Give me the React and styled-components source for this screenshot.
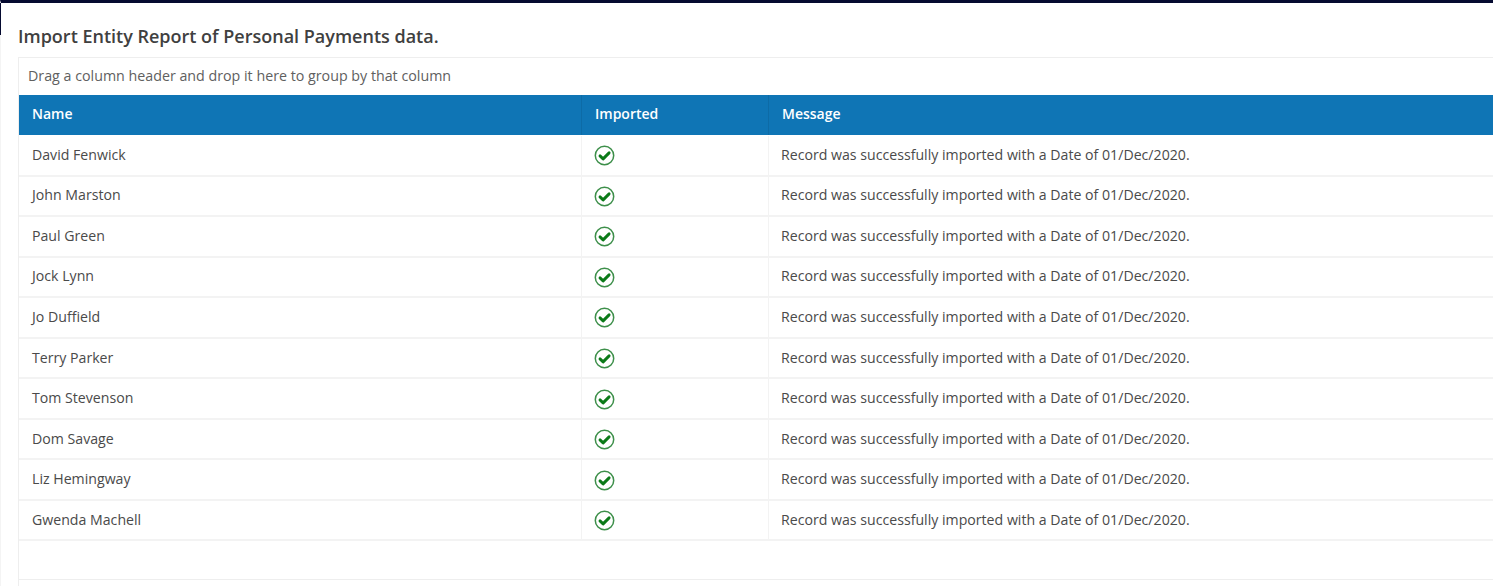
import React from "react";
import styled, { createGlobalStyle } from "styled-components";

const rows = [
  "David Fenwick",
  "John Marston",
  "Paul Green",
  "Jock Lynn",
  "Jo Duffield",
  "Terry Parker",
  "Tom Stevenson",
  "Dom Savage",
  "Liz Hemingway",
  "Gwenda Machell",
];

const message = "Record was successfully imported with a Date of 01/Dec/2020.";

function CheckIcon() {
  return (
    <StatusIcon width="21" height="21" viewBox="0 0 21 21" fill="none">
      <circle cx="10.5" cy="10.5" r="9.2" stroke="#3d8f4a" strokeWidth="1.5" />
      <path
        d="M6 10.9l3.1 3 6-6"
        stroke="#0b7a18"
        strokeWidth="2.9"
        strokeLinecap="round"
        strokeLinejoin="round"
      />
    </StatusIcon>
  );
}

export default function App() {
  return (
    <>
      <GlobalStyle />
      <Page>
        <Content>
          <Title>Import Entity Report of Personal Payments data.</Title>
          <Grid>
            <GroupPanel>Drag a column header and drop it here to group by that column</GroupPanel>
            <HeaderRow>
              <HeaderCell>Name</HeaderCell>
              <HeaderCell>Imported</HeaderCell>
              <HeaderCell>Message</HeaderCell>
            </HeaderRow>
            {rows.map((name) => (
              <Row key={name}>
                <Cell>{name}</Cell>
                <Cell>
                  <CheckIcon />
                </Cell>
                <Cell>{message}</Cell>
              </Row>
            ))}
            <Filler />
            <Footer />
          </Grid>
        </Content>
      </Page>
    </>
  );
}

const GlobalStyle = createGlobalStyle`
  html, body {
    margin: 0;
    padding: 0;
    height: 586px;
    overflow: hidden;
    background: #fff;
  }
  * {
    box-sizing: border-box;
  }
`;

const Page = styled.div`
  position: relative;
  width: 1493px;
  height: 586px;
  border-top: 3px solid #050a30;
  border-left: 1px solid #f4f4f4;
  font-family: "Open Sans", "Noto Sans", sans-serif;
  &::before {
    content: "";
    position: absolute;
    left: -1px;
    top: 0;
    width: 1px;
    height: 32px;
    background: #050a30;
  }
`;

const Content = styled.div`
  padding-left: 17px;
`;

const Title = styled.h1`
  margin: 0;
  height: 54px;
  padding-top: 21px;
  font-size: 18px;
  line-height: 24px;
  font-weight: 600;
  color: #404040;
`;

const Grid = styled.div`
  border-top: 1px solid #eeeeee;
  border-left: 1px solid #eeeeee;
`;

const GroupPanel = styled.div`
  height: 37px;
  padding-left: 9px;
  font-size: 14.25px;
  line-height: 35px;
  color: #606060;
`;

const Columns = styled.div`
  display: grid;
  grid-template-columns: 563px 187px 1fr;
`;

const HeaderRow = styled(Columns)`
  height: 41px;
  background: #0f75b5;
  border-bottom: 1px solid #fff;
`;

const HeaderCell = styled.div`
  padding-left: 13px;
  font-size: 14px;
  font-weight: 600;
  line-height: 37px;
  color: #fff;
  border-right: 1px solid #0d6ba6;
  &:last-child {
    border-right: 0;
  }
`;

const Row = styled(Columns)`
  height: 40.55px;
  border-bottom: 2px solid #f3f3f3;
`;

const Cell = styled.div`
  display: flex;
  align-items: center;
  padding-left: 12px;
  padding-bottom: 2px;
  font-size: 14.15px;
  color: #4a4a4a;
  border-right: 1px solid #f3f3f3;
  &:first-child {
    padding-left: 13px;
  }
  &:last-child {
    border-right: 0;
  }
`;

const StatusIcon = styled.svg`
  margin-top: 3px;
`;

const Filler = styled.div`
  height: 37.5px;
`;

const Footer = styled.div`
  height: 10px;
  border-top: 1px solid #eeeeee;
`;
